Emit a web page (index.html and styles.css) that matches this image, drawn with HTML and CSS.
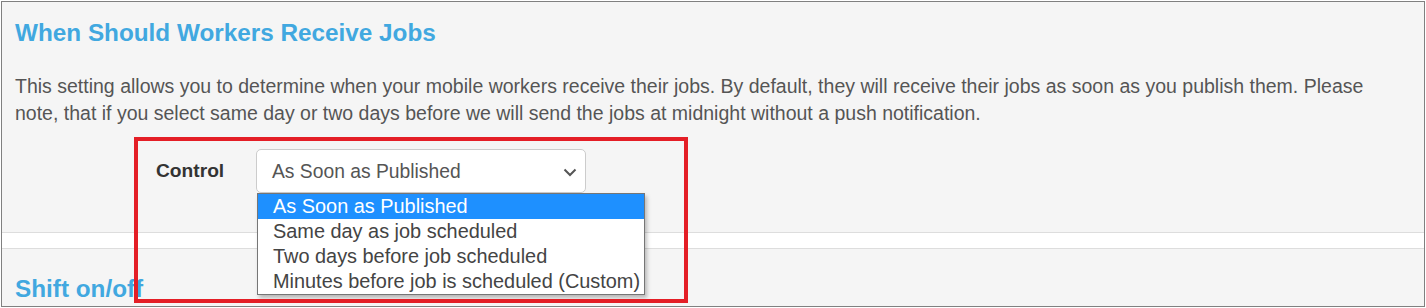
FILE: index.html
```html
<!DOCTYPE html>
<html lang="en">
<head>
<meta charset="utf-8">
<title>When Should Workers Receive Jobs</title>
<link rel="stylesheet" href="styles.css">
</head>
<body>
<div class="frame">
  <section class="panel panel-first">
    <h2 class="panel-title">When Should Workers Receive Jobs</h2>
    <p class="panel-text">This setting allows you to determine when your mobile workers receive their jobs. By default, they will receive their jobs as soon as you publish them. Please note, that if you select same day or two days before we will send the jobs at midnight without a push notification.</p>
    <div class="field-row">
      <label class="field-label">Control</label>
      <div class="select-box">
        <span class="select-value">As Soon as Published</span>
        <svg class="select-chevron" width="14" height="9" viewBox="0 0 14 9"><path d="M1.5 1.5 L7 7 L12.5 1.5" fill="none" stroke="#555" stroke-width="2"/></svg>
      </div>
    </div>
  </section>
  <div class="divider"></div>
  <section class="panel panel-second">
    <h2 class="panel-title">Shift on/off</h2>
  </section>

  <ul class="dropdown">
    <li class="dropdown-item is-active">As Soon as Published</li>
    <li class="dropdown-item">Same day as job scheduled</li>
    <li class="dropdown-item">Two days before job scheduled</li>
    <li class="dropdown-item">Minutes before job is scheduled (Custom)</li>
  </ul>
  <div class="highlight-box"></div>
</div>
</body>
</html>
```

FILE: styles.css
```css
html, body {
  margin: 0;
  padding: 0;
  background: #ffffff;
}

body {
  font-family: "Liberation Sans", Arial, sans-serif;
}

.frame {
  position: relative;
  box-sizing: border-box;
  margin: 1px 0 0 1px;
  width: 1424px;
  height: 306px;
  border: 1px solid #808080;
  background: #f5f5f5;
  overflow: hidden;
}

.panel {
  padding-left: 13px;
  padding-right: 13px;
}

.panel-first {
  box-sizing: border-box;
  height: 230px;
  padding-top: 16px;
}

.panel-second {
  padding-top: 25px;
}

.panel-title {
  margin: 0;
  font-size: 24.3px;
  line-height: 30px;
  font-weight: bold;
  color: #41a8e0;
}

.panel-text {
  margin: 25px 0 0 0;
  font-size: 19.5px;
  line-height: 27px;
  color: #555555;
}

.field-row {
  display: flex;
  align-items: center;
  margin: 22px 0 0 141px;
  height: 44px;
}

.field-label {
  width: 100px;
  font-size: 19.2px;
  font-weight: bold;
  color: #333333;
}

.select-box {
  box-sizing: border-box;
  display: flex;
  align-items: center;
  justify-content: space-between;
  width: 330px;
  height: 44px;
  padding: 2px 8px 0 15px;
  border: 1px solid #cccccc;
  border-radius: 5px;
  background: #ffffff;
}

.select-value {
  font-size: 19.3px;
  color: #555555;
}

.select-chevron {
  display: block;
}

.divider {
  height: 15px;
  background: #ffffff;
  border-top: 1px solid #dddddd;
  border-bottom: 1px solid #dddddd;
}

.dropdown {
  position: absolute;
  left: 255px;
  top: 191px;
  box-sizing: border-box;
  width: 388px;
  margin: 0;
  padding: 0;
  list-style: none;
  background: #ffffff;
  border: 1px solid #767676;
  box-shadow: 2px 3px 4px rgba(0, 0, 0, 0.25);
}

.dropdown-item {
  height: 25px;
  padding-left: 15px;
  font-size: 19.9px;
  line-height: 24px;
  color: #444444;
  white-space: nowrap;
}

.dropdown-item.is-active {
  background: #1e90ff;
  color: #ffffff;
}

.highlight-box {
  position: absolute;
  left: 132px;
  top: 135px;
  box-sizing: border-box;
  width: 554px;
  height: 166px;
  border: 4px solid #e41e26;
}
```
